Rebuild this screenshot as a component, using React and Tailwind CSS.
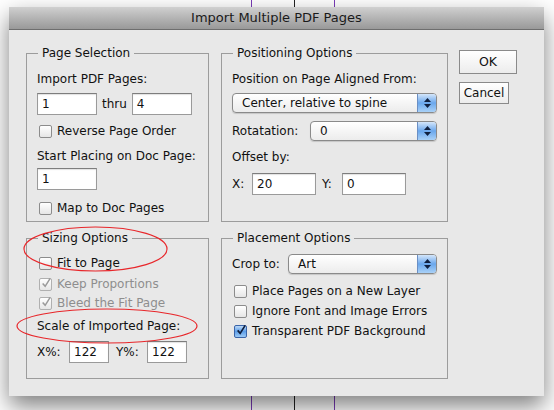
const font = { fontFamily: '"DejaVu Sans", "Liberation Sans", sans-serif' };

function Checkbox({ checked, disabled, blue }) {
  if (blue) {
    return (
      <span className="flex h-[13px] w-[13px] shrink-0 items-center justify-center rounded-[2px] border border-[#3a64a8] bg-gradient-to-b from-[#bcd9f7] via-[#5d9ee8] to-[#9ccaf5]">
        <svg width="12" height="12" viewBox="0 0 12 12" className="-mt-[2px] ml-[1px]">
          <path d="M2 6.5 L5 10 L11 0.5" fill="none" stroke="#0f1e3c" strokeWidth="2" />
        </svg>
      </span>
    );
  }
  return (
    <span
      className={
        'flex h-[13px] w-[13px] shrink-0 items-center justify-center rounded-[2px] border bg-gradient-to-b from-white to-[#e6e6e6] ' +
        (disabled ? 'border-[#b0b0b0]' : 'border-[#8c8c8c]')
      }
    >
      {checked && (
        <svg width="12" height="12" viewBox="0 0 12 12" className="-mt-[2px] ml-[1px]">
          <path d="M2 6.5 L5 10 L11 0.5" fill="none" stroke="#9a9a9a" strokeWidth="1.8" />
        </svg>
      )}
    </span>
  );
}

function CheckRow({ label, checked, disabled, blue, className = '' }) {
  return (
    <div className={'flex h-[16px] items-center gap-[5px] pl-[2px] ' + className}>
      <Checkbox checked={checked} disabled={disabled} blue={blue} />
      <span className={disabled ? 'text-[#8e8e8e]' : 'text-[#111]'}>{label}</span>
    </div>
  );
}

function TextBox({ value, w, h = 'h-[22px]' }) {
  return (
    <div
      className={
        'flex items-center border border-[#9a9a9a] border-t-[#7d7d7d] bg-white pl-[4px] shadow-[inset_0_1px_1px_rgba(0,0,0,0.12)] ' +
        w + ' ' + h
      }
    >
      {value}
    </div>
  );
}

function Popup({ value, w }) {
  return (
    <div
      className={
        'flex h-[20px] items-center overflow-hidden rounded-[4px] border border-[#8a8a8a] bg-gradient-to-b from-white to-[#ececec] shadow-[0_1px_1px_rgba(0,0,0,0.15)] ' +
        w
      }
    >
      <span className="flex-1 pl-[9px]">{value}</span>
      <span className="flex h-full w-[19px] flex-col items-center justify-center gap-[2px] border-l border-[#6b8fc4] bg-gradient-to-b from-[#d4e6fa] via-[#6aa7ec] to-[#a9d1f7]">
        <svg width="7" height="4" viewBox="0 0 7 4"><path d="M0 4 L3.5 0 L7 4Z" fill="#10203f" /></svg>
        <svg width="7" height="4" viewBox="0 0 7 4"><path d="M0 0 L3.5 4 L7 0Z" fill="#10203f" /></svg>
      </span>
    </div>
  );
}

function Group({ title, children, className = '' }) {
  return (
    <div className={'relative border border-[#9c9c9c] ' + className}>
      <span className="absolute left-[11px] top-[-9px] bg-[#e8e8e8] px-[4px] leading-[16px]">{title}</span>
      {children}
    </div>
  );
}

export default function App() {
  return (
    <div className="relative h-[410px] w-[554px] overflow-hidden bg-white text-[12px] leading-[16px] text-[#111]" style={font}>
      {/* guide lines behind the dialog */}
      <div className="absolute left-[251px] top-0 h-full w-px bg-[#7a3bb8]" />
      <div className="absolute left-[294px] top-0 h-full w-px bg-[#222]" />
      <div className="absolute left-[334px] top-0 h-full w-px bg-[#7a3bb8]" />

      <div className="relative ml-[9px] mt-[7px] flex h-[389px] w-[535px] flex-col bg-[#e8e8e8] shadow-[0_10px_22px_rgba(0,0,0,0.5)]">
        {/* title bar */}
        <div className="flex h-[23px] shrink-0 items-center justify-center border-b border-[#6e6e6e] bg-gradient-to-b from-[#d0d0d0] via-[#b4b4b4] to-[#999] text-[13px] text-[#1a1a1a]">
          Import Multiple PDF Pages
        </div>

        <div className="flex pl-[17px] pt-[23px]">
          {/* left column */}
          <div className="flex w-[183px] flex-col gap-[16px]">
            <Group title="Page Selection" className="h-[169px] pl-[10px] pt-[17px]">
              <div>Import PDF Pages:</div>
              <div className="mt-[6px] flex items-center">
                <TextBox value="1" w="w-[60px]" />
                <span className="px-[5px]">thru</span>
                <TextBox value="4" w="w-[60px]" />
              </div>
              <CheckRow label="Reverse Page Order" className="mt-[8px]" />
              <div className="mt-[9px]">Start Placing on Doc Page:</div>
              <div className="mt-[4px]">
                <TextBox value="1" w="w-[60px]" />
              </div>
              <CheckRow label="Map to Doc Pages" className="mt-[10px]" />
            </Group>

            <Group title="Sizing Options" className="h-[141px] pl-[10px] pt-[16px]">
              <CheckRow label="Fit to Page" />
              <CheckRow label="Keep Proportions" checked disabled className="mt-[5px]" />
              <CheckRow label="Bleed the Fit Page" checked disabled className="mt-[3px]" />
              <div className="mt-[7px]">Scale of Imported Page:</div>
              <div className="mt-[7px] flex items-center">
                <span className="w-[32px]">X%:</span>
                <TextBox value="122" w="w-[40px]" />
                <span className="w-[38px] pl-[7px]">Y%:</span>
                <TextBox value="122" w="w-[40px]" />
              </div>
            </Group>
          </div>

          {/* right column */}
          <div className="ml-[12px] flex w-[227px] flex-col gap-[16px]">
            <Group title="Positioning Options" className="h-[169px] pl-[10px] pt-[17px]">
              <div>Position on Page Aligned From:</div>
              <div className="mt-[6px]">
                <Popup value="Center, relative to spine" w="w-[205px]" />
              </div>
              <div className="mt-[8px] flex items-center">
                <span className="w-[78px]">Rotatation:</span>
                <Popup value="0" w="w-[127px]" />
              </div>
              <div className="mt-[8px]">Offset by:</div>
              <div className="mt-[8px] flex items-center">
                <span className="w-[20px]">X:</span>
                <TextBox value="20" w="w-[64px]" />
                <span className="w-[26px] pl-[6px]">Y:</span>
                <TextBox value="0" w="w-[64px]" />
              </div>
            </Group>

            <Group title="Placement Options" className="h-[141px] pl-[10px] pt-[15px]">
              <div className="flex items-center">
                <span className="w-[56px]">Crop to:</span>
                <Popup value="Art" w="w-[149px]" />
              </div>
              <CheckRow label="Place Pages on a New Layer" className="mt-[9px]" />
              <CheckRow label="Ignore Font and Image Errors" className="mt-[4px]" />
              <CheckRow label="Transparent PDF Background" blue className="mt-[4px]" />
            </Group>
          </div>

          {/* buttons */}
          <div className="ml-[11px] -mt-[3px] flex flex-col gap-[8px]">
            <button className="h-[24px] w-[58px] border border-[#8a8a8a] bg-gradient-to-b from-white to-[#ececec] p-0 text-[12.5px]">OK</button>
            <button className="h-[22px] w-[50px] border border-[#8a8a8a] bg-gradient-to-b from-white to-[#ececec] p-0 text-[12px]">Cancel</button>
          </div>
        </div>

        {/* annotation ellipses */}
        <svg className="pointer-events-none absolute left-0 top-0" width="535" height="389">
          <ellipse cx="86.5" cy="242" rx="71.5" ry="22" fill="none" stroke="#e8262a" strokeWidth="1.2" />
          <ellipse cx="98" cy="319" rx="90" ry="17" fill="none" stroke="#e8262a" strokeWidth="1.2" />
        </svg>
      </div>
    </div>
  );
}
